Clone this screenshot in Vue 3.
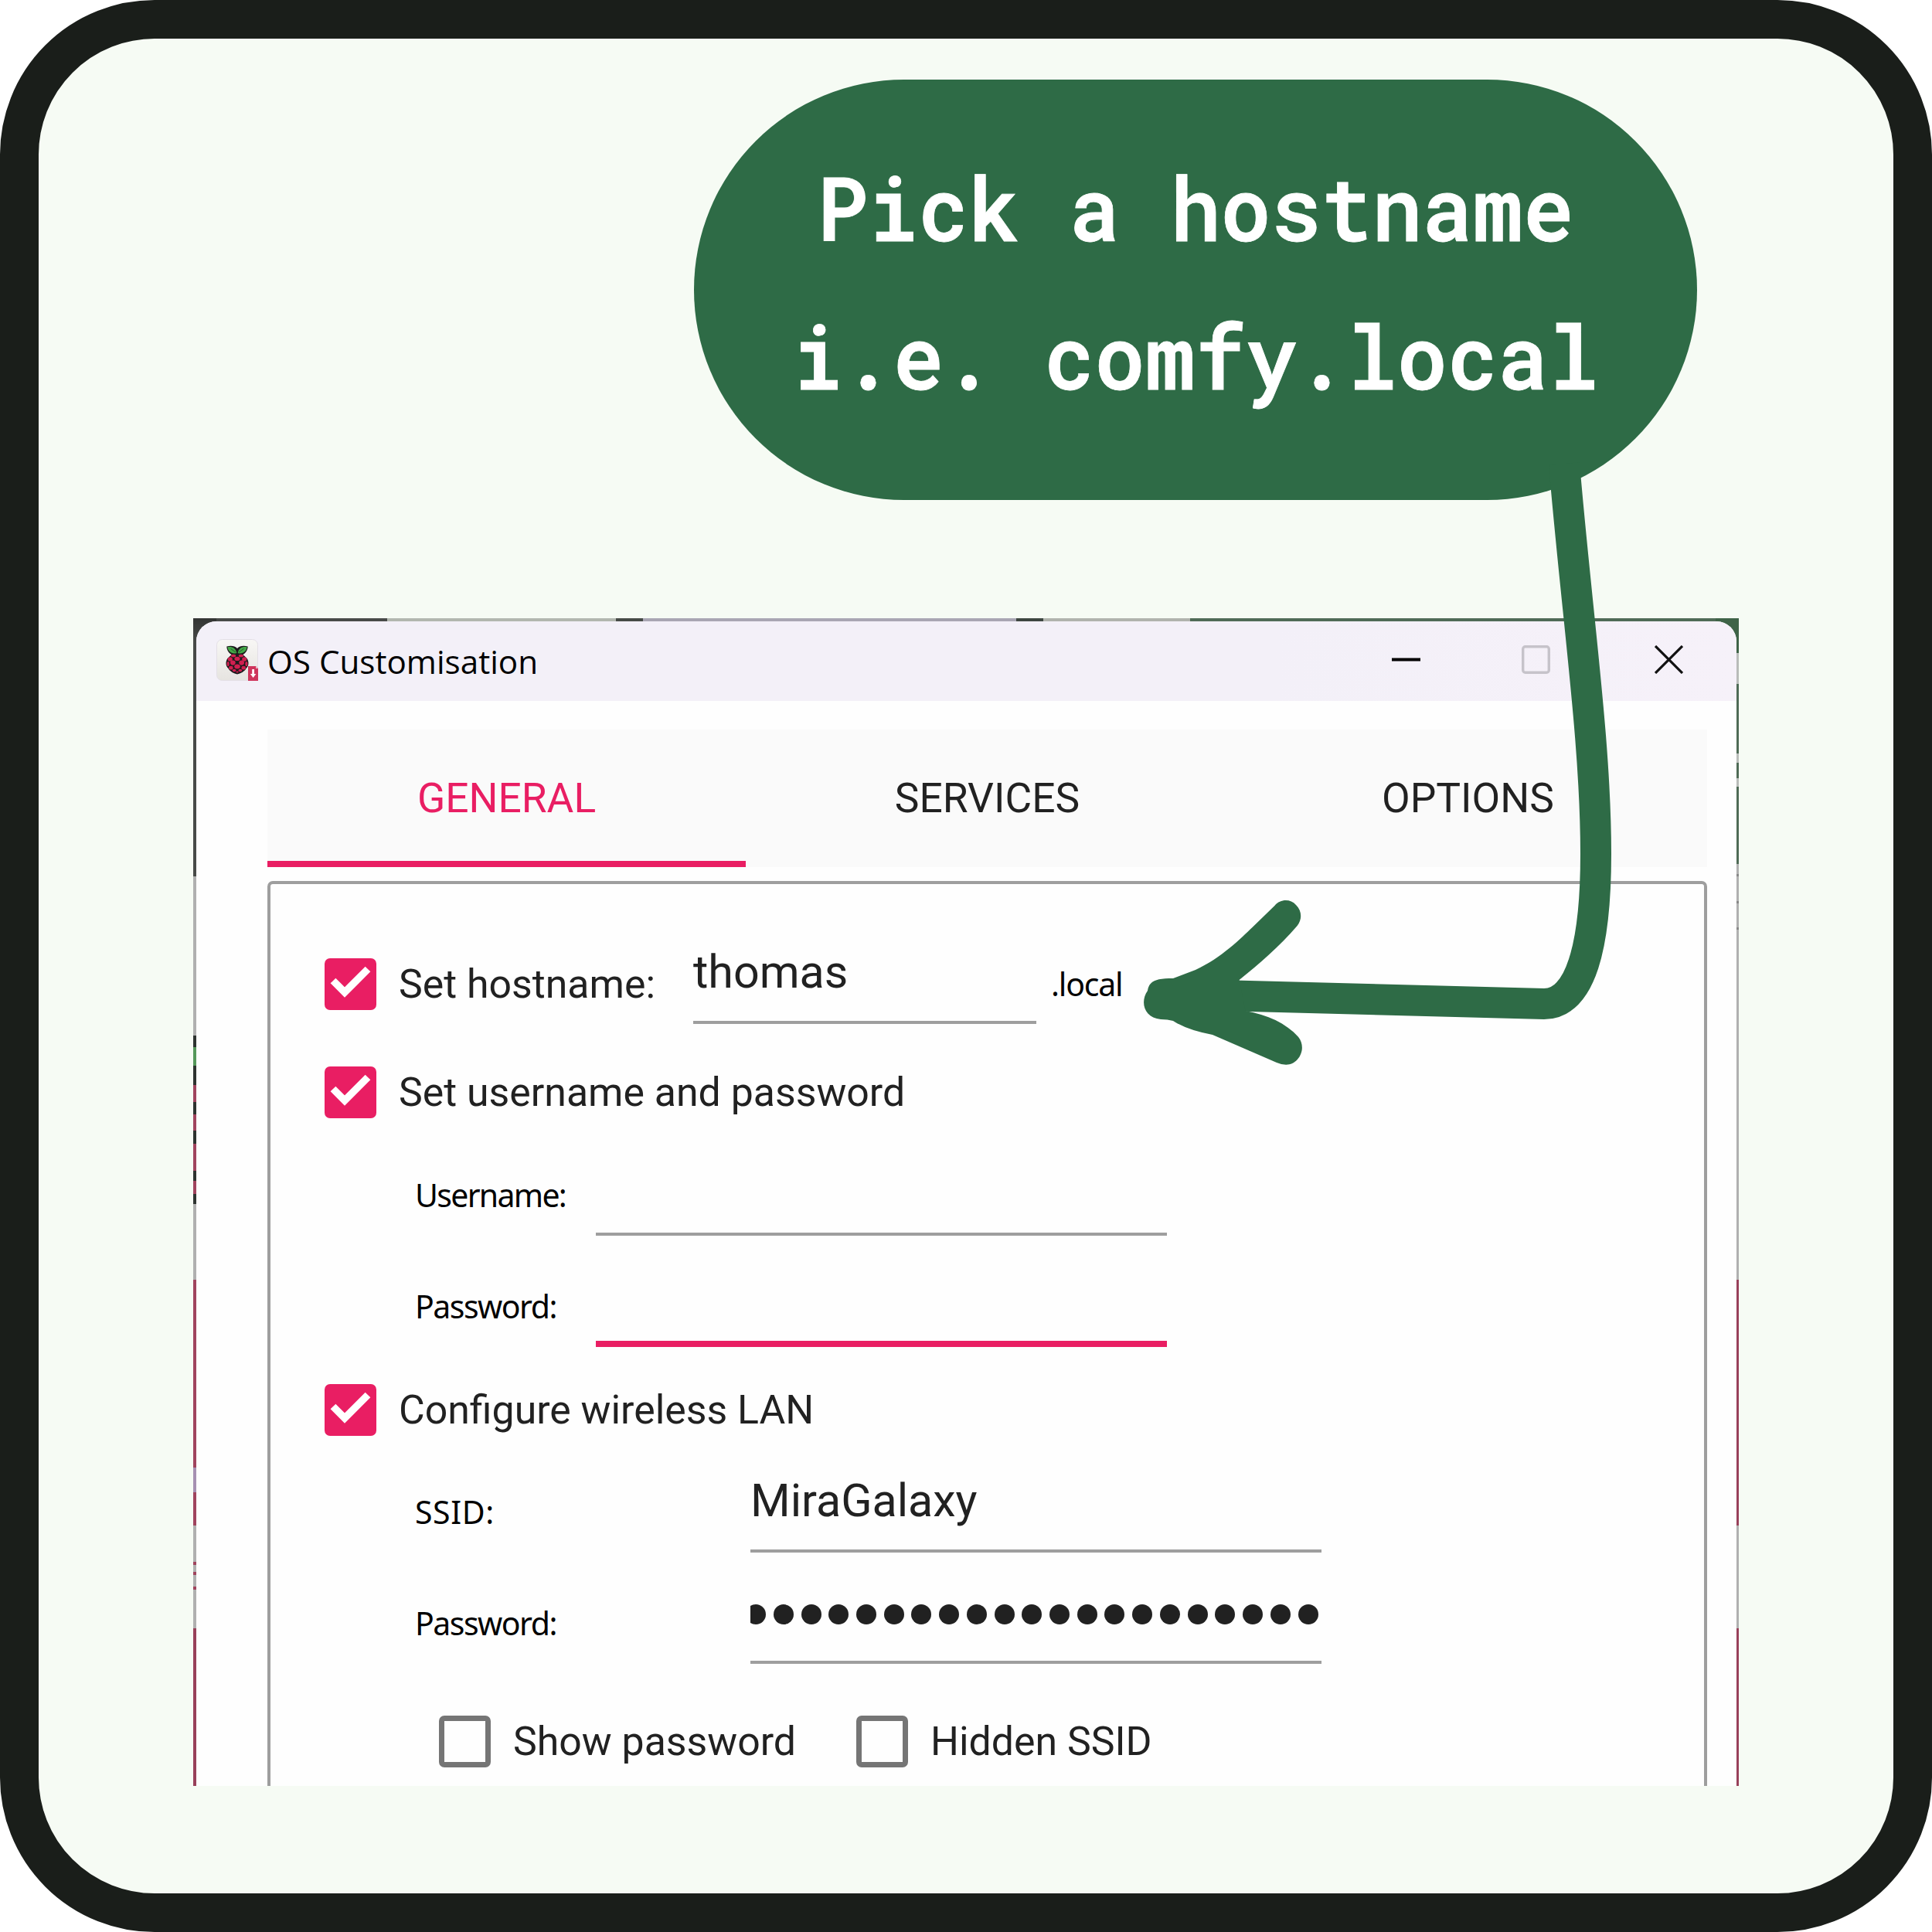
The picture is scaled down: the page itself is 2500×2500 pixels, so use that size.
<script setup>
const tabs = ['GENERAL', 'SERVICES', 'OPTIONS']
const activeTab = 'GENERAL'
const passwordLength = 21
const drupelets = [
  [22.3, 21.6, 3, 1.9], [31.7, 21.6, 3, 1.9], [27, 25.4, 3.4, 2.6],
  [18.2, 26, 2.9, 2.8], [35.8, 26, 2.9, 2.8],
  [21.6, 30.6, 3.2, 3.1], [32.4, 30.6, 3.2, 3.1],
  [15.7, 32, 1.5, 3.1], [38.3, 32, 1.5, 3.1],
  [27, 35.4, 3.6, 3], [19.2, 37.2, 2.6, 2.4], [34.8, 37.2, 2.6, 2.4],
  [23.3, 40.5, 2.3, 1.7], [30.7, 40.5, 2.3, 1.7], [27, 42.6, 1.6, 1],
]
</script>

<template>
  <main class="artboard">
    <div class="bubble">
      <p class="bubble-text">Pick a hostname<br />i.e. comfy.local</p>
    </div>

    <section class="capture">
      <div class="window">
        <header class="titlebar">
          <svg class="app-icon" viewBox="0 0 54 54">
            <defs>
              <linearGradient id="tile" x1="0" y1="0" x2="0" y2="1">
                <stop offset="0" stop-color="#f8f7f5" />
                <stop offset="1" stop-color="#e6e4e0" />
              </linearGradient>
            </defs>
            <rect x=".5" y=".5" width="53" height="53" rx="7" fill="url(#tile)" stroke="#e3dfe6" />
            <g transform="translate(27 27) scale(1.05 1) translate(-27 -27)">
              <path d="M14 9.500C19 8 24 8.500 27 12C30 8.500 35 8 40 9.500C40 14 37.500 18 34 20L39 25C42 30 41 35 38 38C36 42 31 44.500 27 45.500C23 44.500 18 42 16 38C13 35 12 30 15 25L20 20C16.500 18 14 14 14 9.500Z" fill="#1d1a1c" />
              <path d="M15 10.300C20 9.200 25 11 26.300 18C20.500 20 15.500 16 15 10.300ZM39 10.300C34 9.200 29 11 27.700 18C33.500 20 38.500 16 39 10.300Z" fill="#43a747" />
              <path d="M19 12.500L25 17M35 12.500L29 17" stroke="#1f4a22" stroke-width=".8" />
              <ellipse v-for="(d, i) in drupelets" :key="i" :cx="d[0]" :cy="d[1]" :rx="d[2]" :ry="d[3]" fill="#d01f50" />
            </g>
            <path d="M41 35H51L54 38V54H41Z" fill="#cf355c" />
            <path d="M51 35L54 38H51Z" fill="#f0b8c4" />
            <path d="M46.200 39H49V45H51.300L47.600 50L43.900 45H46.200Z" fill="#fff" />
          </svg>
          <h1 class="title">OS Customisation</h1>
          <div class="controls">
            <svg width="37" height="37" viewBox="0 0 37 37"><path d="M0 18.500H37" stroke="#000" stroke-width="4" /></svg>
            <svg class="maximize" width="37" height="37" viewBox="0 0 37 37"><rect x="1.700" y="1.700" width="33.600" height="33.600" rx="3" fill="none" stroke="#c6c3ca" stroke-width="3.400" /></svg>
            <svg class="close" width="37" height="37" viewBox="0 0 37 37"><path d="M1 1L36 36M36 1L1 36" stroke="#111" stroke-width="3.200" /></svg>
          </div>
        </header>

        <div class="content">
          <nav class="tabs">
            <div v-for="t in tabs" :key="t" class="tab" :class="{ active: t === activeTab }">{{ t }}</div>
          </nav>

          <div class="group">
            <div class="row">
              <div class="option hostname-option">
                <span class="box checked"><svg viewBox="0 0 67 67"><path d="M11 29L26 44L56 14" /></svg></span>
                <span class="label">Set hostname:</span>
              </div>
              <div class="field short">thomas</div>
              <span class="small suffix">.local</span>
            </div>

            <div class="row user-row">
              <div class="option">
                <span class="box checked"><svg viewBox="0 0 67 67"><path d="M11 29L26 44L56 14" /></svg></span>
                <span class="label">Set username and password</span>
              </div>
            </div>
            <div class="row first-field">
              <span class="small key username">Username:</span>
              <div class="field"></div>
            </div>
            <div class="row next-field">
              <span class="small key">Password:</span>
              <div class="field focused"></div>
            </div>

            <div class="row wifi-row">
              <div class="option">
                <span class="box checked"><svg viewBox="0 0 67 67"><path d="M11 29L26 44L56 14" /></svg></span>
                <span class="label">Configure wireless LAN</span>
              </div>
            </div>
            <div class="row wifi-row">
              <span class="small key wide ssid">SSID:</span>
              <div class="field">MiraGalaxy</div>
            </div>
            <div class="row next-field">
              <span class="small key wide">Password:</span>
              <div class="field masked">
                <i v-for="n in passwordLength" :key="n" class="dot"></i>
              </div>
            </div>

            <div class="row flags">
              <div class="option show-option">
                <span class="box"></span>
                <span class="label">Show password</span>
              </div>
              <div class="option">
                <span class="box"></span>
                <span class="label">Hidden SSID</span>
              </div>
            </div>
          </div>
        </div>
      </div>
    </section>

    <svg class="arrow" viewBox="0 0 2500 2500">
      <path class="shaft" d="M2024 600C2041 800 2065 960 2065 1105C2065 1225 2045 1299 1998 1299L1540 1287" />
      <path
        class="head"
        d="M1649.600 1171.700C1657 1163 1670 1163 1677 1171C1685 1179 1685 1190 1678.600 1198C1655 1225 1630 1247 1603.600 1268L1611.600 1308C1640 1313 1664 1324 1680 1341.700C1692 1357 1680 1378 1664 1377.700Q1658 1377.500 1652 1375L1569 1339Q1536 1333 1518 1321Q1511 1319 1502 1319C1480 1317 1475 1296 1485 1282C1487 1270 1494 1266 1518 1266L1547 1255C1580 1240 1607 1213 1620.500 1200Z"
      />
    </svg>
  </main>
</template>

<style>
body {
  margin: 0;
  background: #fff;
}
</style>

<style scoped>
* {
  box-sizing: border-box;
}

.artboard {
  position: relative;
  width: 2500px;
  height: 2500px;
  border: 50px solid #1a1e1a;
  border-radius: 200px;
  background: #f6fbf4;
  display: flex;
  flex-direction: column;
}

.bubble {
  flex: none;
  width: 1298px;
  height: 544px;
  margin: 53px 0 0 848px;
  padding-top: 68px;
  border-radius: 272px;
  background: #2e6b46;
}

.bubble-text {
  margin: 0;
  color: #fff;
  font: 600 115px/192px 'Roboto Mono', 'Liberation Mono', monospace;
  text-align: center;
  white-space: nowrap;
  transform: scaleX(0.945);
  -webkit-text-stroke: 0.8px #fff;
}

.capture {
  flex: none;
  width: 2000px;
  height: 1511px;
  margin: 153px 0 0 200px;
  padding: 4px 3px 0 4px;
  background:
    linear-gradient(#333533, #484a48) 0 0 / 30px 30px no-repeat,
    linear-gradient(#3f6347, #3f6347) 100% 0 / 30px 45px no-repeat,
    linear-gradient(90deg, #484a48 251px, #b2b7af 251px 547px, #464a46 547px 582px, #a9a6b3 582px 1065px, #3d4640 1065px 1100px, #b0b3ad 1100px 1290px, #4f6b56 1290px) 0 0 / 100% 4px no-repeat,
    linear-gradient(#484a48 334px, #b0b0b0 334px 540px, #2e3330 540px 555px, #55985a 555px 579px, #2e3330 579px 604px, #a0445e 604px 626px, #2e3330 626px 642px, #a0445e 642px 663px, #2e3330 663px 680px, #a0445e 680px 715px, #2e3330 715px 728px, #a0445e 728px 745px, #2e3330 745px 758px, #b0b0b0 758px 856px, #a0445e 856px 1099px, #a690b2 1099px 1131px, #a0445e 1131px 1174px, #b0b0b0 1174px 1221px, #a0445e 1221px 1225px, #b0b0b0 1225px 1234px, #a0445e 1234px 1238px, #b0b0b0 1238px 1253px, #a0445e 1253px 1257px, #b0b0b0 1257px 1307px, #98405a 1307px) 0 0 / 4px 100% no-repeat,
    linear-gradient(#3f6347 45px, #b9bcb9 45px 85px, #4f6b56 85px 175px, #b9bcb9 175px 187px, #4f6b56 187px 207px, #b9bcb9 207px 218px, #4f6b56 218px 318px, #b0b0b0 318px 331px, #888 331px 334px, #b0b0b0 334px 366px, #888 366px 369px, #b0b0b0 369px 400px, #888 400px 403px, #b0b0b0 403px 856px, #98405a 856px 1174px, #b0b0b0 1174px 1307px, #98405a 1307px) 100% 0 / 4px 100% no-repeat;
}

.window {
  height: 100%;
  display: flex;
  flex-direction: column;
  overflow: hidden;
  border-radius: 26px 26px 0 0;
  background: #fefefe;
}

.titlebar {
  flex: none;
  height: 103px;
  display: flex;
  align-items: center;
  padding: 0 69px 0 26px;
  background: linear-gradient(90deg, #f3f0f8 70%, #f6f1f9);
}

.app-icon {
  width: 54px;
  height: 54px;
  margin-bottom: 3px;
}

.title {
  margin: 0 0 0 12px;
  color: #000;
  font: 400 42.2px/103px 'Open Sans', 'Noto Sans', sans-serif;
}

.controls {
  display: flex;
  align-items: center;
  margin: 0 0 4px auto;
}

.maximize {
  margin-left: 131px;
}

.close {
  margin-left: 135px;
}

.content {
  flex: 1;
  min-height: 0;
  display: flex;
  flex-direction: column;
  padding: 37px 38px 0 92px;
  color: #212121;
  font-family: Roboto, sans-serif;
}

.tabs {
  flex: none;
  height: 178px;
  display: flex;
  gap: 3px;
  background: #fafafa;
}

.tab {
  flex: 1;
  font-size: 53.3px;
  font-weight: 400;
  line-height: 178px;
  text-align: center;
}

.tab.active {
  color: #e91e63;
  box-shadow: inset 0 -8px #e91e63;
}

.group {
  flex: 1;
  min-height: 0;
  margin-top: 18px;
  padding: 77px 0 0 70px;
  border: 4px solid #9e9e9e;
  border-bottom: 0;
  border-radius: 7px 7px 0 0;
  overflow: hidden;
}

.row {
  height: 104px;
  display: flex;
  align-items: center;
}

.user-row {
  margin-top: 36px;
}

.first-field {
  margin-top: 30px;
}

.next-field {
  margin-top: 40px;
}

.wifi-row {
  margin-top: 29px;
}

.flags {
  margin-top: 48px;
  padding-left: 148px;
}

.option {
  display: flex;
  align-items: center;
  gap: 29px;
}

.hostname-option {
  width: 477px;
}

.show-option {
  width: 540px;
}

.box {
  width: 67px;
  height: 67px;
  border: 7px solid #757575;
  border-radius: 7px;
}

.box.checked {
  border: 0;
  background: #e91e63;
}

.box svg {
  display: block;
  fill: none;
  stroke: #fff;
  stroke-width: 9.5px;
}

.label {
  font-size: 51.8px;
  line-height: 67px;
  white-space: nowrap;
}

.small {
  padding-bottom: 2px;
  color: #000;
  font: 400 41px/60px 'Noto Sans', sans-serif;
  letter-spacing: -1.5px;
}

.suffix {
  margin-left: 19px;
  padding-bottom: 1px;
  letter-spacing: -1.2px;
}

.key {
  width: 351px;
  padding-left: 117px;
}

.key.wide {
  width: 551px;
}

.username {
  letter-spacing: -1.7px;
}

.ssid {
  letter-spacing: 0.6px;
}

.field {
  width: 739px;
  height: 104px;
  border-bottom: 4px solid #9e9e9e;
  font-size: 59.2px;
  line-height: 73px;
}

.field.short {
  width: 444px;
}

.field.focused {
  border-bottom: 8px solid #e91e63;
}

.field.masked {
  display: flex;
  justify-content: flex-end;
  gap: 9.73px;
  overflow: hidden;
  padding: 27px 4.5px 0 0;
}

.dot {
  flex: none;
  width: 26px;
  height: 26px;
  border-radius: 50%;
  background: #212121;
}

.arrow {
  position: absolute;
  top: -50px;
  left: -50px;
  width: 2500px;
  height: 2500px;
}

.shaft {
  fill: none;
  stroke: #2e6b46;
  stroke-width: 40px;
}

.head {
  fill: #2e6b46;
}
</style>
